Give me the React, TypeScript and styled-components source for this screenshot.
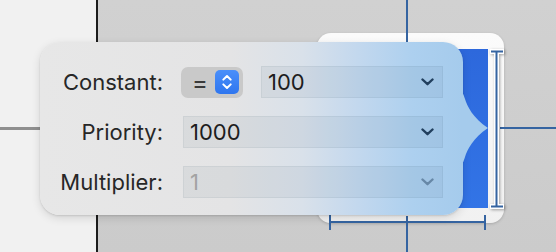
import styled, { createGlobalStyle } from 'styled-components'

const GlobalStyle = createGlobalStyle`
  html, body {
    margin: 0;
    padding: 0;
    width: 556px;
    height: 252px;
    overflow: hidden;
  }
  body {
    font-family: Inter, "Noto Sans", "Liberation Sans", sans-serif;
  }
`

const Page = styled.div`
  position: relative;
  display: flex;
  width: 556px;
  height: 252px;
  overflow: hidden;
`

const Sidebar = styled.div`
  position: relative;
  width: 96px;
  flex: none;
  background: #f1f1f1;
  border-right: 2px solid #1c1c1c;

  // outline row divider peeking out from under the popover
  &::after {
    content: '';
    position: absolute;
    left: 0;
    right: 0;
    top: 127px;
    height: 3px;
    background: #8f8f8f;
  }
`

const Canvas = styled.div`
  position: relative;
  flex: 1;
  background: linear-gradient(180deg, #d1d1d1 0%, #cbcbcb 100%);
`

const View = styled.div`
  position: absolute;
  left: 219px;
  top: 33px;
  width: 187px;
  height: 190px;
  border-radius: 14px;
  background: linear-gradient(180deg, #fbfbfb 0%, #f1f1f1 100%);
  box-shadow: 0 1px 3px rgba(0, 0, 0, 0.18);
`

const Fill = styled.div`
  position: absolute;
  left: 12px;
  right: 16px;
  top: 16px;
  bottom: 15px;
  background: linear-gradient(180deg, #2d68dc 0%, #3274e6 100%);
`

const Guides = styled.svg`
  position: absolute;
  left: 0;
  top: 0;
  pointer-events: none;
`

const Popover = styled.div`
  position: absolute;
  left: 40px;
  top: 42px;
  width: 423px;
  height: 173px;
  box-sizing: border-box;
  padding: 24px 20px 0 20px;
  border-radius: 20px;
  background: linear-gradient(
    90deg,
    #e7e7e7 0%,
    #e4e4e5 45%,
    #d9e1ea 62%,
    #c3d8ee 75%,
    #add0ef 88%,
    #a5cbec 100%
  );
  box-shadow: 0 1px 2px rgba(0, 0, 0, 0.12), 0 3px 10px rgba(0, 0, 0, 0.12);
  display: grid;
  grid-template-columns: 103px 1fr;
  grid-auto-rows: 32px;
  column-gap: 20px;
  row-gap: 18px;
  align-items: center;
`

const Arrow = styled.svg`
  position: absolute;
  right: -28px;
  top: 50px;
`

const Label = styled.div`
  text-align: right;
  font-size: 22px;
  color: #272727;
  white-space: nowrap;
`

const Controls = styled.div`
  display: flex;
  align-items: center;
  gap: 18px;
  height: 100%;
`

const Relation = styled.div`
  display: flex;
  align-items: center;
  justify-content: space-between;
  width: 62px;
  height: 31px;
  margin-left: -2px;
  box-sizing: border-box;
  padding: 0 4px 0 11px;
  border-radius: 7px;
  background: #c9c9c9;
  font-size: 24px;
  color: #3a3a3a;
`

const Field = styled.div<{ $disabled?: boolean }>`
  flex: 1;
  height: 100%;
  box-sizing: border-box;
  display: flex;
  align-items: center;
  justify-content: space-between;
  padding: 0 8px 0 6px;
  background: rgba(40, 60, 90, 0.06);
  border: 1px solid rgba(40, 60, 90, 0.06);
  font-size: 22px;
  color: ${(p) => (p.$disabled ? '#a3a3a3' : '#1d1d1d')};

  svg {
    opacity: ${(p) => (p.$disabled ? 0.45 : 1)};
  }
`

const Chevron = () => (
  <svg width="13" height="8" viewBox="0 0 13 8">
    <path d="M1.5 1.5 L6.5 6.2 L11.5 1.5" fill="none" stroke="#213f5e" strokeWidth="2.4" strokeLinecap="round" strokeLinejoin="round" />
  </svg>
)

const Stepper = () => (
  <svg width="24" height="24" viewBox="0 0 24 24">
    <defs>
      <linearGradient id="stepBlue" x1="0" y1="0" x2="0" y2="1">
        <stop offset="0" stopColor="#4a8ffa" />
        <stop offset="1" stopColor="#2f76ef" />
      </linearGradient>
    </defs>
    <rect x="0" y="0" width="24" height="24" rx="5" fill="url(#stepBlue)" />
    <path d="M8.3 9.6 L12 6 L15.7 9.6 M8.3 14.4 L12 18 L15.7 14.4" fill="none" stroke="#fff" strokeWidth="2" strokeLinecap="round" strokeLinejoin="round" />
  </svg>
)

const rows = [
  { label: 'Constant:', value: '100', relation: true },
  { label: 'Priority:', value: '1000' },
  { label: 'Multiplier:', value: '1', disabled: true },
]

const App = () => {
  const line = '#3564a1'
  return (
    <Page>
      <GlobalStyle />
      <Sidebar />
      <Canvas>
        <View>
          <Fill />
        </View>
        <Guides width="458" height="252" viewBox="0 0 458 252">
          {/* top / bottom centre guides */}
          <rect x="308" y="0" width="2" height="60" fill={line} />
          <rect x="308" y="216" width="2" height="36" fill={line} />
          {/* width constraint */}
          <rect x="231" y="221" width="157" height="2" fill={line} />
          <rect x="231" y="215" width="2" height="15" fill={line} />
          <rect x="386" y="215" width="2" height="15" fill={line} />
          {/* trailing guide */}
          <rect x="402" y="127" width="56" height="2" fill={line} />
          {/* height I-beam */}
          <g filter="drop-shadow(1px 1px 1.5px rgba(0,0,0,0.35))">
            <rect x="396" y="50" width="5" height="158" fill="#fff" />
            <rect x="392" y="49" width="14" height="5" fill="#fff" />
            <rect x="392" y="204" width="14" height="5" fill="#fff" />
          </g>
          <rect x="397.5" y="51" width="2" height="155" fill={line} />
          <rect x="393" y="50.5" width="12" height="2" fill={line} />
          <rect x="393" y="205.5" width="12" height="2" fill={line} />
        </Guides>
      </Canvas>
      <Popover>
        <Arrow width="30" height="72" viewBox="0 0 30 72">
          <path d="M0 0 C2 0 3 4 4 7 C6 14 12 26 27 36 C12 46 6 58 4 65 C3 68 2 72 0 72 Z" fill="#a5cbec" />
        </Arrow>
        {rows.map((r) => (
          <>
            <Label key={r.label + '-l'}>{r.label}</Label>
            <Controls key={r.label + '-c'}>
              {r.relation && (
                <Relation>
                  <span>=</span>
                  <Stepper />
                </Relation>
              )}
              <Field $disabled={r.disabled}>
                <span>{r.value}</span>
                <Chevron />
              </Field>
            </Controls>
          </>
        ))}
      </Popover>
    </Page>
  )
}

export default App
